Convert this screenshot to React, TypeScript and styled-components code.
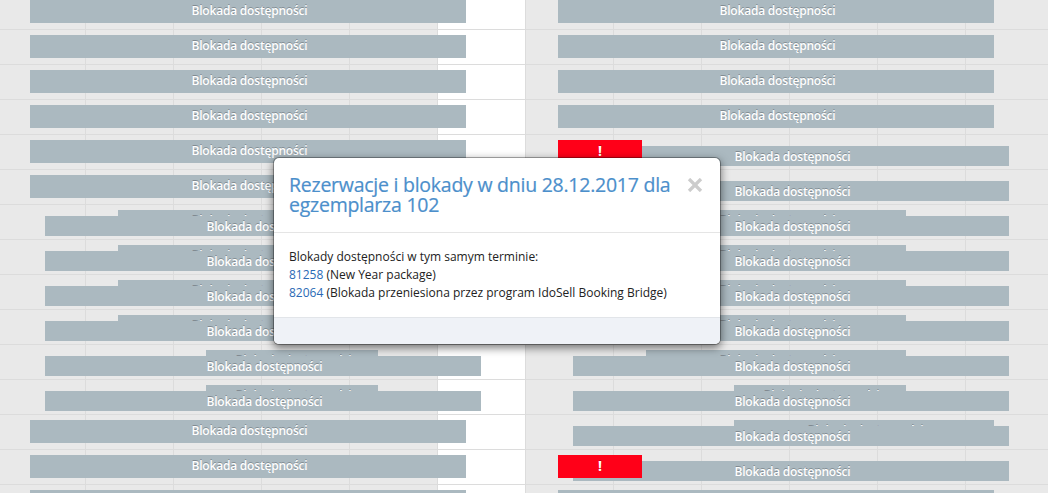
import React from 'react'
import styled, { createGlobalStyle } from 'styled-components'

type BarKind = 'block' | 'lowered' | 'conflict'

interface IBar {
  kind: BarKind
  left: number
  width: number
}

const block = (left: number, width = 436): IBar => ({ kind: 'block', left, width })
const lowered = (left: number): IBar => ({ kind: 'lowered', left, width: 436 })
const conflict = (left: number): IBar => ({ kind: 'conflict', left, width: 84 })

const cells = Array.from({ length: 12 }, (_, idx) => idx)
const FREE_CELL = 5

const rows: IBar[][] = [
  [block(30), block(558)],
  [block(30), block(558)],
  [block(30), block(558)],
  [block(30), block(558)],
  [block(30), lowered(573), conflict(558)],
  [block(30), lowered(573)],
  [block(118, 260), lowered(45), block(646, 260), lowered(573)],
  [block(118, 260), lowered(45), block(646, 260), lowered(573)],
  [block(118, 260), lowered(45), block(646, 260), lowered(573)],
  [block(118, 260), lowered(45), block(646, 260), lowered(573)],
  [block(206, 172), lowered(45), block(646, 260), lowered(573)],
  [block(206, 172), lowered(45), block(734, 172), lowered(573)],
  [block(30), block(734, 260), lowered(573)],
  [block(30), lowered(573), conflict(558)],
  [block(30), block(558)]
]

const reservations = [
  { id: '81258', name: 'New Year package' },
  { id: '82064', name: 'Blokada przeniesiona przez program IdoSell Booking Bridge' }
]

const App: React.FC = () => (
  <StyledPage>
    <GlobalStyle />
    <StyledCalendar>
      {rows.map((bars, rowIdx) => (
        <StyledRow key={rowIdx}>
          <StyledCells>
            {cells.map(i => (
              <StyledCell key={i} $free={i === FREE_CELL} />
            ))}
          </StyledCells>
          {bars.map((bar, idx) => (
            <StyledBar key={idx} $kind={bar.kind} $left={bar.left} $width={bar.width}>
              {bar.kind === 'conflict' ? '!' : rowIdx < rows.length - 1 && 'Blokada dostępności'}
            </StyledBar>
          ))}
        </StyledRow>
      ))}
    </StyledCalendar>
    <StyledModal role="dialog">
      <StyledModalHeader>
        <StyledModalTitle>Rezerwacje i blokady w dniu 28.12.2017 dla egzemplarza 102</StyledModalTitle>
        <StyledModalClose aria-label="Zamknij">
          <svg width="16" height="14" viewBox="0 0 16 14">
            <path d="M2 1L14 13M14 1L2 13" stroke="#ccc" strokeWidth="3.3" />
          </svg>
        </StyledModalClose>
      </StyledModalHeader>
      <StyledModalBody>
        <div>Blokady dostępności w tym samym terminie:</div>
        {reservations.map(i => (
          <div key={i.id}>
            <StyledLink href="#">{i.id}</StyledLink> ({i.name})
          </div>
        ))}
      </StyledModalBody>
      <StyledModalFooter />
    </StyledModal>
  </StyledPage>
)

const GlobalStyle = createGlobalStyle`
  body {
    margin: 0;
    font-family: 'Open Sans', 'Liberation Sans', sans-serif;
    font-size: 12px;
    color: #222;
  }
`

const StyledPage = styled.main`
  position: relative;
  width: 1048px;
  height: 493px;
  overflow: hidden;
  background: #e9e9e9;
`

const StyledCalendar = styled.section`
  margin-top: -5px;
`
const StyledRow = styled.div`
  display: grid;
  grid-template-columns: 1048px;
  grid-template-rows: 35px;
`
const StyledCells = styled.div`
  display: flex;
  grid-area: 1 / 1;
  margin-left: -2px;
  overflow: hidden;
`
const StyledCell = styled.div<{ $free: boolean }>`
  flex: 0 0 88px;
  box-sizing: border-box;
  background: ${({ $free }) => ($free ? '#fff' : '#e9e9e9')};
  border-right: 1px solid #dcdcdc;
  border-bottom: 1px solid #dcdcdc;
`
const StyledBar = styled.div<{ $kind: BarKind; $left: number; $width: number }>`
  grid-area: 1 / 1;
  box-sizing: border-box;
  width: ${({ $width }) => $width}px;
  height: ${({ $kind }) => ($kind === 'lowered' ? 20 : 23)}px;
  margin-top: ${({ $kind }) => ($kind === 'lowered' ? 11 : 5)}px;
  margin-left: ${({ $left }) => $left}px;
  padding-left: ${({ $kind }) => ($kind === 'conflict' ? 0 : 3)}px;
  background: ${({ $kind }) => ($kind === 'conflict' ? '#ff0018' : '#abb9c0')};
  color: #fff;
  font-size: ${({ $kind }) => ($kind === 'conflict' ? 14 : 12)}px;
  font-weight: ${({ $kind }) => ($kind === 'conflict' ? 700 : 600)};
  letter-spacing: ${({ $kind }) => ($kind === 'conflict' ? 0 : -0.2)}px;
  line-height: ${({ $kind }) => ($kind === 'lowered' ? 22 : 21)}px;
  text-align: center;
  text-shadow: 0 -1px 0 rgba(0, 0, 0, 0.25);
  white-space: nowrap;
`

const StyledModal = styled.section`
  position: absolute;
  top: 157px;
  left: 273px;
  box-sizing: border-box;
  width: 448px;
  height: 188px;
  display: flex;
  flex-direction: column;
  background: #fff;
  background-clip: padding-box;
  border: 1px solid rgba(0, 0, 0, 0.3);
  border-radius: 6px;
  box-shadow: 0 3px 9px rgba(0, 0, 0, 0.5);
`
const StyledModalHeader = styled.header`
  display: flex;
  align-items: flex-start;
  justify-content: space-between;
  box-sizing: border-box;
  height: 75px;
  padding: 17px 17px 0 15px;
  border-bottom: 1px solid #e5e5e5;
`
const StyledModalTitle = styled.h4`
  width: 390px;
  margin: 0;
  font-size: 19.5px;
  font-weight: 400;
  line-height: 20px;
  letter-spacing: -0.25px;
  color: #4c8fcb;
  -webkit-text-stroke: 0.2px #4c8fcb;
`
const StyledModalClose = styled.button`
  display: flex;
  margin-top: 3px;
  padding: 0;
  background: none;
  border: 0;
`
const StyledModalBody = styled.div`
  flex: 1;
  padding: 15px;
  line-height: 18px;
`
const StyledLink = styled.a`
  color: #2a6ab5;
  text-decoration: none;
`
const StyledModalFooter = styled.footer`
  box-sizing: border-box;
  height: 27px;
  background: #eff2f7;
  border-top: 1px solid #e2e5e9;
  border-radius: 0 0 5px 5px;
`

export default App
